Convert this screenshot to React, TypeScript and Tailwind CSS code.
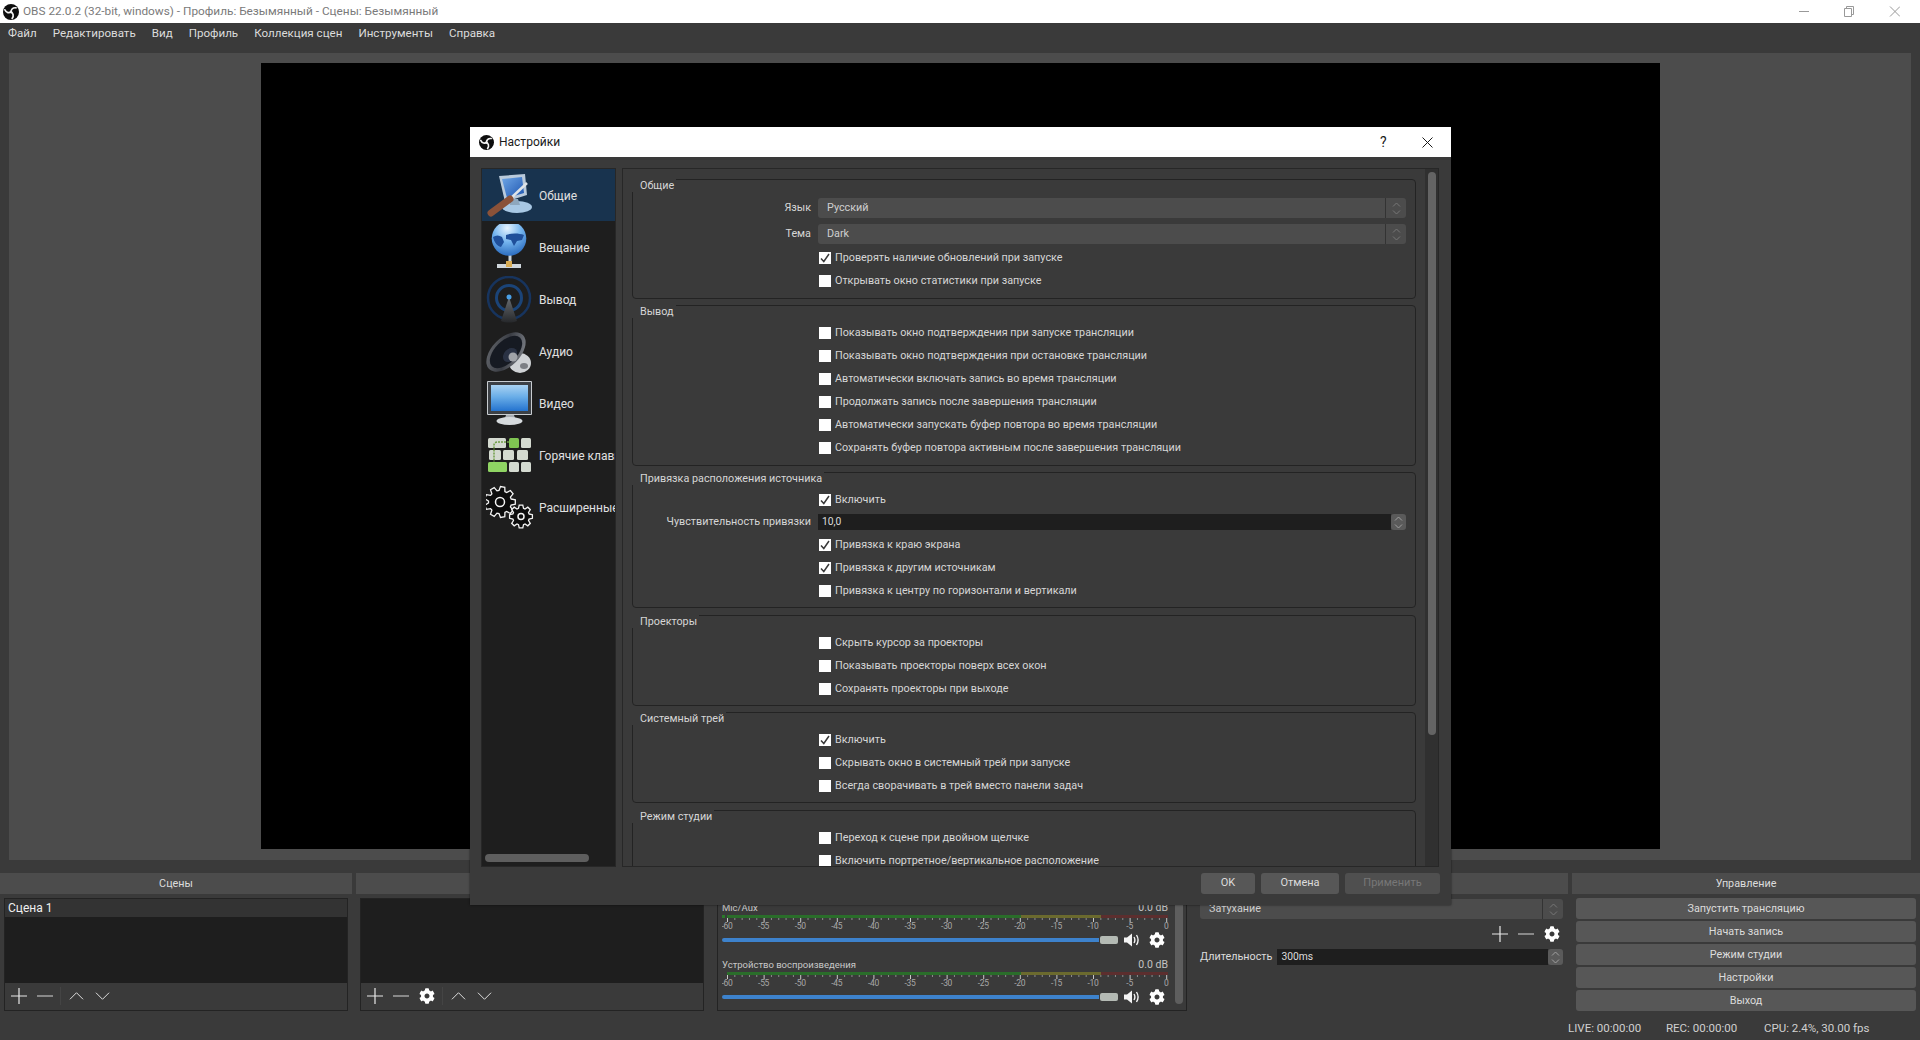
import type { ReactNode } from "react";
import { FaCog } from "react-icons/fa";

const MENU = ["Файл", "Редактировать", "Вид", "Профиль", "Коллекция сцен", "Инструменты", "Справка"];
const CONTROLS = ["Запустить трансляцию", "Начать запись", "Режим студии", "Настройки", "Выход"];
const SCALE = [-60, -55, -50, -45, -40, -35, -30, -25, -20, -15, -10, -5, 0];

function ObsLogo({ className }: { className: string }) {
  const arm = "M8 8.500C7.700 5.800 9.500 3.400 13 3.800";
  return (
    <svg viewBox="0 0 16 16" className={className}>
      <circle cx="8" cy="8" r="8" fill="#0d0d0d" />
      <g fill="none" stroke="#f4f4f4" strokeWidth="1.700" strokeLinecap="round">
        <path d={arm} />
        <path d={arm} transform="rotate(120 8 8)" />
        <path d={arm} transform="rotate(240 8 8)" />
      </g>
    </svg>
  );
}

function Plus() {
  return (
    <svg viewBox="0 0 16 16" className="h-[16px] w-[16px]">
      <path d="M0 8h16M8 0v16" stroke="#e8e8e8" strokeWidth="1.2" />
    </svg>
  );
}

function Minus() {
  return (
    <svg viewBox="0 0 16 16" className="h-[16px] w-[16px]">
      <path d="M0 8h16" stroke="#bdbdbd" strokeWidth="1.2" />
    </svg>
  );
}

function Up() {
  return (
    <svg viewBox="0 0 16 10" className="h-[10px] w-[15px]">
      <path d="M1 8.500 8 1.500l7 7" fill="none" stroke="#e8e8e8" strokeWidth="1" />
    </svg>
  );
}

function Down() {
  return (
    <svg viewBox="0 0 16 10" className="h-[10px] w-[15px]">
      <path d="M1 1.500 8 8.500l7-7" fill="none" stroke="#e8e8e8" strokeWidth="1" />
    </svg>
  );
}

function Speaker() {
  return (
    <svg viewBox="0 0 16 14" className="h-[14px] w-[16px]">
      <path d="M0 4.500h3L8 .5v13l-5-4H0z" fill="#f4f4f4" />
      <path d="M10 4c1 1.700 1 4.300 0 6M12.500 2c1.900 3 1.900 7 0 10" fill="none" stroke="#f4f4f4" strokeWidth="1.400" />
    </svg>
  );
}

function Spin({ color = "#8a8a8a" }: { color?: string }) {
  return (
    <svg viewBox="0 0 9 15" className="h-[15px] w-[9px]">
      <path d="M1 5.500 4.500 2 8 5.500M1 9.500 4.500 13 8 9.500" fill="none" stroke={color} strokeWidth="1" />
    </svg>
  );
}

function IconButton({ children }: { children: ReactNode }) {
  return <span className="flex h-full w-[26px] items-center justify-center">{children}</span>;
}

function Toolbar({ gear }: { gear?: boolean }) {
  return (
    <div className="flex h-[27px] shrink-0 items-center bg-[#3a3a3a] pb-[2px] pl-px">
      <IconButton><Plus /></IconButton>
      <IconButton><Minus /></IconButton>
      {gear && <IconButton><FaCog className="h-[16px] w-[16px] text-white" /></IconButton>}
      <span className="mx-[2px] h-[18px] w-px bg-[#444]" />
      <IconButton><Up /></IconButton>
      <IconButton><Down /></IconButton>
    </div>
  );
}

function DockTitle({ children }: { children?: ReactNode }) {
  return (
    <div className="flex h-[21px] shrink-0 items-center justify-center bg-[#4c4c4c] pt-px text-[#dcdcdc]">
      {children}
    </div>
  );
}

function MeterScale({ clip }: { clip?: boolean }) {
  const step = 36.6;
  const x0 = 5;
  const minor = Array.from({ length: 61 }, (_, i) => i);
  return (
    <svg width="450" height="18" viewBox="0 0 450 18" className="block shrink-0">
      {clip && <rect x="0" y="0" width="3" height="3" fill="#2b7a2b" />}
      <rect x={x0} y="0" width="294" height="3" fill="#2a6d2a" />
      <rect x={x0 + 294} y="0" width="80" height="3" fill="#6b6a2e" />
      <rect x={x0 + 374} y="0" width="67" height="3" fill="#5c2e2e" />
      {minor.map((i) => (
        <rect key={i} x={x0 + (i * step) / 5} y="3" width="1" height={i % 5 === 0 ? 4 : 2} fill={i % 5 === 0 ? "#c8c8c8" : "#8c8c8c"} />
      ))}
      {SCALE.map((v, i) => (
        <text key={v} x={x0 + i * step} y="13.500" textAnchor="middle" fontSize="8.500" fill="#a8a8a8" letterSpacing="-0.3">
          {v}
        </text>
      ))}
    </svg>
  );
}

function MixerRow({ name, clip }: { name: string; clip?: boolean }) {
  return (
    <div className="flex h-[57px] shrink-0 flex-col">
      <div className="flex h-[14px] w-[446px] items-center justify-between text-[9.500px] text-[#c8c8c8]">
        <span>{name}</span>
        <span className="text-[10.500px] text-[#c4c4c4]">0.0 dB</span>
      </div>
      <MeterScale clip={clip} />
      <div className="flex h-[14px] items-center">
        <span className="h-[4px] w-[377px] rounded-l-full bg-[#3d82cc]" />
        <span className="ml-px h-[8px] w-[18px] rounded-[2px] bg-[#b4bab4]" />
        <span className="ml-[6px] flex w-[16px] justify-center"><Speaker /></span>
        <span className="ml-[9px] flex w-[16px] justify-center"><FaCog className="h-[16px] w-[16px] text-white" /></span>
      </div>
    </div>
  );
}

function Select({ value }: { value: string }) {
  return (
    <div className="flex h-[20px] w-full items-center rounded-[3px] bg-[#4c4c4c]">
      <span className="flex-1 pl-[9px] text-[#cfcfcf]">{value}</span>
      <span className="flex h-full w-[21px] items-center justify-center border-l border-[#333]">
        <Spin color="#777" />
      </span>
    </div>
  );
}

function NumberInput({ value }: { value: string }) {
  return (
    <div className="flex h-[16px] min-w-0 flex-1 items-center">
      <span className="flex h-full flex-1 items-center bg-[#1e1e1e] pl-[4px] text-[10.300px] text-[#dcdcdc]">{value}</span>
      <span className="flex h-full w-[15px] items-center justify-center rounded-[3px] bg-[#5a5a5a]">
        <Spin color="#a0a0a0" />
      </span>
    </div>
  );
}

function Check({ label, checked }: { label: string; checked?: boolean }) {
  return (
    <div className="flex h-[23px] items-center pl-[186px] text-[#d6d6d6]">
      <span className="flex h-[12px] w-[12px] shrink-0 items-center justify-center bg-white">
        {checked && (
          <svg viewBox="0 0 12 12" className="h-[12px] w-[12px]">
            <path d="M2 6.500 4.800 9.500 10 2" fill="none" stroke="#3a3a3a" strokeWidth="1.500" />
          </svg>
        )}
      </span>
      <span className="ml-[4px] whitespace-nowrap pt-px">{label}</span>
    </div>
  );
}

function Labeled({ label, className, children }: { label: string; className: string; children: ReactNode }) {
  return (
    <div className={`flex items-center ${className}`}>
      <span className="w-[178px] shrink-0 text-right text-[#d6d6d6]">{label}</span>
      <div className="ml-[7px] flex flex-1 items-center">{children}</div>
    </div>
  );
}

function Group({ title, className, children }: { title: string; className: string; children: ReactNode }) {
  return (
    <section className={`relative shrink-0 rounded-[4px] border border-[#232323] pr-[9px] pt-[15px] ${className}`}>
      <span className="absolute -left-px -top-px rounded-br-[2px] bg-[#3a3a3a] pl-[8px] pr-[2px] leading-[13px] text-[#d6d6d6]">{title}</span>
      {children}
    </section>
  );
}

function GeneralIcon() {
  return (
    <svg viewBox="0 0 48 48" className="h-[48px] w-[48px]">
      <defs>
        <linearGradient id="gen-screen" x1="0" y1="0" x2="1" y2="1">
          <stop offset="0" stopColor="#6ea6e6" />
          <stop offset="1" stopColor="#1d55b0" />
        </linearGradient>
      </defs>
      <ellipse cx="31" cy="35" rx="15" ry="6" fill="#a8c8e4" />
      <path d="M13 4 39 2l2 21-22 7z" fill="#b9cadb" />
      <path d="M16 7 36 5l2 16-17 5z" fill="url(#gen-screen)" />
      <path d="M24 27h8l2 6H24z" fill="#8ea7bd" />
      <path d="M24 27 41 11" stroke="#dfe4e8" strokeWidth="2.500" />
      <path d="M5 41 24 27" stroke="#8a5239" strokeWidth="7" strokeLinecap="round" />
    </svg>
  );
}

function GlobeIcon() {
  return (
    <svg viewBox="0 0 48 48" className="h-[48px] w-[48px]">
      <defs>
        <radialGradient id="globe-fill" cx="0.45" cy="0.2" r="0.9">
          <stop offset="0" stopColor="#e6f4ff" />
          <stop offset="0.45" stopColor="#74b4ee" />
          <stop offset="1" stopColor="#1a5bb4" />
        </radialGradient>
      </defs>
      <path d="M22.500 30h3v10h-3z" fill="#c9d2da" />
      <circle cx="23" cy="14.500" r="17.300" fill="url(#globe-fill)" />
      <path d="M7 13c3-2 6-2 9 0l2 5-3 5c-4-1-7-5-8-10zM20 11c5-2 13-2 18 0l-2 5-5 1-3 5-3-6-5-1z" fill="#1f4f9a" />
      <path d="M11 40h24v4H11z" fill="#cfd6dc" />
      <path d="M20 37h6v6h-6z" fill="#d8ac55" />
    </svg>
  );
}

function OutputIcon() {
  return (
    <svg viewBox="0 0 48 48" className="h-[48px] w-[48px]">
      <defs>
        <linearGradient id="output-cone" x1="0" y1="0" x2="0" y2="1">
          <stop offset="0" stopColor="#6a6e72" />
          <stop offset="1" stopColor="#26282b" />
        </linearGradient>
      </defs>
      <circle cx="23" cy="22" r="21" fill="none" stroke="#17345e" strokeWidth="2.500" />
      <circle cx="23" cy="22" r="12.500" fill="none" stroke="#1b4478" strokeWidth="3" />
      <path d="M23 21 31 45c-5 2-11 2-16 0z" fill="url(#output-cone)" />
      <circle cx="23" cy="21" r="2.500" fill="#4aa0e6" />
    </svg>
  );
}

function AudioIcon() {
  return (
    <svg viewBox="0 0 48 48" className="h-[48px] w-[48px]">
      <defs>
        <linearGradient id="audio-rim" x1="1" y1="0" x2="0" y2="1">
          <stop offset="0" stopColor="#8b8f96" />
          <stop offset="0.5" stopColor="#3a3d44" />
          <stop offset="1" stopColor="#6a6d72" />
        </linearGradient>
      </defs>
      <ellipse cx="34" cy="35" rx="11" ry="10" fill="#cfd2d5" />
      <ellipse cx="38" cy="38" rx="4" ry="3" fill="#7c7f84" />
      <ellipse cx="20" cy="24" rx="14" ry="24" transform="rotate(45 20 24)" fill="url(#audio-rim)" />
      <ellipse cx="20" cy="24" rx="11" ry="20" transform="rotate(45 20 24)" fill="#161a22" />
      <ellipse cx="24" cy="27" rx="6" ry="8" transform="rotate(45 24 27)" fill="#2a3244" />
      <circle cx="27" cy="29" r="4.500" fill="#a0a3a8" />
    </svg>
  );
}

function VideoIcon() {
  return (
    <svg viewBox="0 0 48 48" className="h-[48px] w-[48px]">
      <defs>
        <linearGradient id="video-screen" x1="0" y1="0" x2="0" y2="1">
          <stop offset="0" stopColor="#a9d2f2" />
          <stop offset="0.45" stopColor="#6aaee8" />
          <stop offset="1" stopColor="#2473cf" />
        </linearGradient>
      </defs>
      <rect x="1" y="1" width="45" height="34" rx="1" fill="#c8ccd0" />
      <rect x="2" y="2" width="43" height="32" fill="#3c4045" />
      <rect x="5" y="5" width="37" height="26" fill="url(#video-screen)" />
      <path d="M20 35h8l1 3H19z" fill="#a8adb2" />
      <ellipse cx="23.500" cy="41" rx="13" ry="4" fill="#d6dadd" />
    </svg>
  );
}

function HotkeysIcon() {
  const keys = [
    [2, 6, 18, "#d4dad0"], [23, 6, 10, "#7fc452"], [35, 6, 10, "#d4dad0"],
    [3, 18, 12, "#d4dad0"], [17, 18, 11, "#d4dad0"], [31, 18, 11, "#d4dad0"],
    [2, 30, 19, "#8fd463"], [23, 30, 10, "#d4dad0"], [35, 30, 10, "#d4dad0"],
  ] as const;
  return (
    <svg viewBox="0 0 48 48" className="h-[48px] w-[48px]">
      {keys.map(([x, y, w, fill]) => (
        <rect key={`${x}-${y}`} x={x} y={y} width={w} height="10" rx="1.500" fill={fill} />
      ))}
      <path d="M23 10h-11c-2 0-4 1-4 3v17" fill="none" stroke="#6f9e45" strokeWidth="1.500" strokeDasharray="2 1" />
    </svg>
  );
}

function gearPath(cx: number, cy: number, outer: number, inner: number, teeth: number) {
  const pts: string[] = [];
  for (let i = 0; i < teeth; i++) {
    const a = (i / teeth) * Math.PI * 2;
    const w = Math.PI / teeth / 2;
    [[-1.500, inner], [-0.800, outer], [0.800, outer], [1.500, inner]].forEach(([k, r]) => {
      const t = a + k * w;
      pts.push(`${(cx + Math.cos(t) * r).toFixed(1)} ${(cy + Math.sin(t) * r).toFixed(1)}`);
    });
  }
  return `M${pts.join("L")}Z`;
}

function AdvancedIcon() {
  return (
    <svg viewBox="0 0 48 48" className="h-[48px] w-[48px]">
      <path d={gearPath(14, 18, 15.500, 11.500, 9)} fill="#0c0c0c" stroke="#f4f4f4" strokeWidth="1.300" />
      <circle cx="14" cy="18" r="4.500" fill="#0c0c0c" stroke="#f4f4f4" strokeWidth="1.500" />
      <path d={gearPath(35, 32.500, 11.500, 8.500, 8)} fill="#0c0c0c" stroke="#f4f4f4" strokeWidth="1.300" />
      <circle cx="35" cy="32.500" r="3" fill="#0c0c0c" stroke="#f4f4f4" strokeWidth="1.500" />
    </svg>
  );
}

const NAV = [
  { label: "Общие", Icon: GeneralIcon },
  { label: "Вещание", Icon: GlobeIcon },
  { label: "Вывод", Icon: OutputIcon },
  { label: "Аудио", Icon: AudioIcon },
  { label: "Видео", Icon: VideoIcon },
  { label: "Горячие клавиши", Icon: HotkeysIcon },
  { label: "Расширенные", Icon: AdvancedIcon },
];

function SettingsDialog() {
  return (
    <div className="absolute left-[470px] top-[127px] flex h-[778px] w-[981px] flex-col bg-[#3a3a3a] shadow-[0_0_2px_rgba(0,0,0,0.6)]">
      <div className="flex h-[30px] shrink-0 items-center bg-white pl-[9px] text-[12px] text-[#1a1a1a]">
        <ObsLogo className="h-[15px] w-[15px]" />
        <span className="ml-[5px] flex-1">Настройки</span>
        <span className="mr-[-3px] w-[10px] text-[14px] leading-none">?</span>
        <svg viewBox="0 0 11 11" className="ml-[35px] mr-[18px] h-[11px] w-[11px]">
          <path d="M.5.5l10 10M10.500.5l-10 10" stroke="#1a1a1a" strokeWidth="1" />
        </svg>
      </div>

      <div className="flex h-[699px] shrink-0 gap-[6px] pl-[11px] pr-[12px] pt-[11px] box-content">
        <nav className="flex w-[135px] shrink-0 flex-col border border-[#272727] bg-[#1e1e1e] text-[12px] text-[#e0e0e0]">
          <div className="min-h-0 flex-1 overflow-hidden">
            {NAV.map(({ label, Icon }, i) => (
              <div key={label} className={`flex h-[52px] items-center whitespace-nowrap pl-[4px] pt-px ${i === 0 ? "bg-[#18334e]" : ""}`}>
                <span className="h-[48px] w-[48px] shrink-0"><Icon /></span>
                <span className="ml-[5px] pt-px">{label}</span>
              </div>
            ))}
          </div>
          <div className="flex h-[13px] shrink-0 items-center pb-[3px] pl-[3px]">
            <span className="h-[8px] w-[104px] rounded-full bg-[#5e5e5e]" />
          </div>
        </nav>

        <div className="flex min-w-0 flex-1 overflow-hidden border border-[#272727] text-[10.800px]">
          <div className="flex min-w-0 flex-1 flex-col overflow-hidden pl-[9px] pr-[9px] pt-[10px]">
            <div className="flex flex-col gap-[6px]">
              <Group title="Общие" className="pb-[6px]">
                <Labeled label="Язык" className="mt-[3px] h-[20px]"><Select value="Русский" /></Labeled>
                <Labeled label="Тема" className="mt-[6px] h-[20px]"><Select value="Dark" /></Labeled>
                <div className="mt-[2px]">
                  <Check label="Проверять наличие обновлений при запуске" checked />
                  <Check label="Открывать окно статистики при запуске" />
                </div>
              </Group>

              <Group title="Вывод" className="pb-[6px]">
                <Check label="Показывать окно подтверждения при запуске трансляции" />
                <Check label="Показывать окно подтверждения при остановке трансляции" />
                <Check label="Автоматически включать запись во время трансляции" />
                <Check label="Продолжать запись после завершения трансляции" />
                <Check label="Автоматически запускать буфер повтора во время трансляции" />
                <Check label="Сохранять буфер повтора активным после завершения трансляции" />
              </Group>

              <Group title="Привязка расположения источника" className="pb-[5px]">
                <Check label="Включить" checked />
                <Labeled label="Чувствительность привязки" className="h-[22px]"><NumberInput value="10,0" /></Labeled>
                <Check label="Привязка к краю экрана" checked />
                <Check label="Привязка к другим источникам" checked />
                <Check label="Привязка к центру по горизонтали и вертикали" />
              </Group>

              <Group title="Проекторы" className="mt-px pb-[5px]">
                <Check label="Скрыть курсор за проекторы" />
                <Check label="Показывать проекторы поверх всех окон" />
                <Check label="Сохранять проекторы при выходе" />
              </Group>

              <Group title="Системный трей" className="pb-[5px]">
                <Check label="Включить" checked />
                <Check label="Скрывать окно в системный трей при запуске" />
                <Check label="Всегда сворачивать в трей вместо панели задач" />
              </Group>

              <Group title="Режим студии" className="mt-px pb-[5px]">
                <Check label="Переход к сцене при двойном щелчке" />
                <Check label="Включить портретное/вертикальное расположение" />
              </Group>
            </div>
          </div>
          <div className="flex w-[13px] shrink-0 justify-center bg-[#303030] pt-[3px]">
            <span className="h-[563px] w-[8px] rounded-full bg-[#646464]" />
          </div>
        </div>
      </div>

      <div className="mt-[6px] flex justify-end gap-[6px] pr-[11px] text-[11px]">
        <span className="flex h-[21px] w-[54px] items-center justify-center rounded-[3px] bg-[#575757] text-[#dcdcdc]">OK</span>
        <span className="flex h-[21px] w-[78px] items-center justify-center rounded-[3px] bg-[#575757] text-[#dcdcdc]">Отмена</span>
        <span className="flex h-[21px] w-[95px] items-center justify-center rounded-[3px] bg-[#4f4f4f] text-[#777]">Применить</span>
      </div>
    </div>
  );
}

export default function App() {
  return (
    <div className="relative flex h-[1040px] w-[1920px] flex-col overflow-hidden bg-[#3a3a3a] text-[10.800px] [font-family:Roboto,sans-serif]">
      <header className="flex h-[23px] shrink-0 items-center bg-white pl-[3px] text-[11.800px] text-[#7a7a7a]">
        <ObsLogo className="h-[16px] w-[16px]" />
        <span className="ml-[4px] flex-1">OBS 22.0.2 (32-bit, windows) - Профиль: Безымянный - Сцены: Безымянный</span>
        <svg viewBox="0 0 101 11" className="mr-[20px] h-[11px] w-[101px]" fill="none" stroke="#999" strokeWidth="1">
          <path d="M0 5.500h10" />
          <path d="M45.500 2.500h7v8h-7zM47.500 2.500V.5h7v8h-2" />
          <path d="M91 .5l10 10M101 .5l-10 10" />
        </svg>
      </header>

      <nav className="flex h-[30px] shrink-0 items-center gap-[16px] pb-[8px] pl-[8px] text-[11.600px] text-[#dcdcdc]">
        {MENU.map((item) => (
          <span key={item}>{item}</span>
        ))}
      </nav>

      <main className="mx-[9px] flex h-[807px] shrink-0 items-start justify-center bg-[#4c4c4c] pt-[10px]">
        <div className="h-[786px] w-[1399px] bg-black" />
      </main>

      <div className="mt-[13px] flex h-[138px] shrink-0 gap-[4px]">
        <section className="flex w-[352px] shrink-0 flex-col">
          <DockTitle>Сцены</DockTitle>
          <div className="ml-[4px] mr-[4px] mt-[4px] flex min-h-0 flex-1 flex-col border border-[#232323]">
            <div className="min-h-0 flex-1 bg-[#1e1e1e]">
              <div className="flex h-[18px] items-center bg-[#333] pb-px pl-[3px] text-[12px] text-[#f0f0f0]">Сцена 1</div>
            </div>
            <Toolbar />
          </div>
        </section>

        <section className="flex w-[352px] shrink-0 flex-col">
          <DockTitle />
          <div className="ml-[4px] mr-[4px] mt-[4px] flex min-h-0 flex-1 flex-col border border-[#232323]">
            <div className="min-h-0 flex-1 bg-[#1e1e1e]" />
            <Toolbar gear />
          </div>
        </section>

        <section className="ml-px flex w-[479px] shrink-0 flex-col">
          <DockTitle />
          <div className="ml-[4px] mr-[5px] mt-[4px] flex min-h-0 flex-1 overflow-hidden border border-[#232323]">
            <div className="flex-1 pl-[4px] pt-[2px]">
              <MixerRow name="Mic/Aux" clip />
              <MixerRow name="Устройство воспроизведения" />
            </div>
            <div className="flex w-[14px] shrink-0 justify-center">
              <span className="mt-[2px] h-[103px] w-[8px] rounded-full bg-[#5e5e5e]" />
            </div>
          </div>
        </section>

        <section className="flex w-[372px] shrink-0 flex-col">
          <DockTitle />
          <div className="mt-[5px] flex flex-col pl-[4px] pr-[5px]">
            <Select value="Затухание" />
            <div className="flex h-[30px] items-center justify-end gap-[10px] pr-[3px]">
              <Plus />
              <Minus />
              <FaCog className="h-[16px] w-[16px] text-white" />
            </div>
            <div className="flex h-[16px] items-center gap-[5px]">
              <span className="whitespace-nowrap text-[#dcdcdc]">Длительность</span>
              <NumberInput value="300ms" />
            </div>
          </div>
        </section>

        <section className="flex min-w-0 flex-1 flex-col">
          <DockTitle>Управление</DockTitle>
          <div className="mt-[4px] flex flex-col gap-[2px] pl-[4px] pr-[4px]">
            {CONTROLS.map((label) => (
              <span key={label} className="flex h-[21px] items-center justify-center rounded-[3px] bg-[#575757] pt-px text-[#dcdcdc]">
                {label}
              </span>
            ))}
          </div>
        </section>
      </div>

      <footer className="flex min-h-0 flex-1 items-center pl-[1568px] pt-[7px] text-[11.500px] text-[#d0d0d0]">
        <span className="w-[98px]">LIVE: 00:00:00</span>
        <span className="w-[98px]">REC: 00:00:00</span>
        <span>CPU: 2.4%, 30.00 fps</span>
      </footer>

      <SettingsDialog />
    </div>
  );
}
